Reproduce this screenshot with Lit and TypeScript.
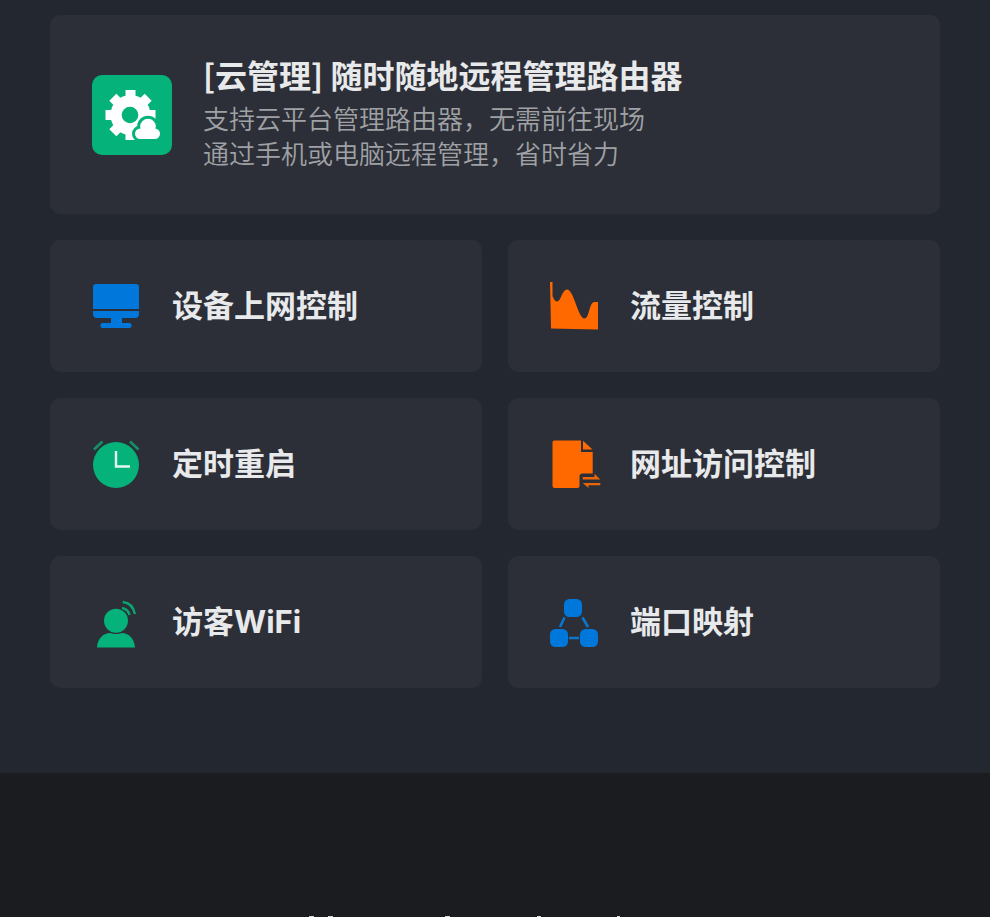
import { LitElement, html, svg, css } from "lit";
import { customElement } from "lit/decorators.js";

const monitor = svg`
  <g fill="#0078db">
    <path d="M4 2h40a3 3 0 0 1 3 3v22H1V5a3 3 0 0 1 3-3zM1 29h46v3a4 4 0 0 1-4 4H5a4 4 0 0 1-4-4z"/>
    <path d="M19 35h11v8H19z"/>
    <rect x="8.500" y="41" width="31" height="5" rx="2"/>
  </g>`;

const traffic = svg`
  <path fill="#ff6900" d="M0 0h2.500v14C4 18 5.500 19.500 7 19.500c4 0 5-12 10-12 7 0 11 29 17.500 29 5 0 4.500-16.500 10-16.500H48v27.500L1 46.500z"/>`;

const clock = svg`
  <circle cx="24" cy="25" r="23" fill="#05b27a"/>
  <path d="M24 11v15.500H38" fill="none" stroke="#e2f7ef" stroke-width="2.400"/>
  <path d="M2 9.500l8.500-8M38 1.500l8.500 8" fill="none" stroke="#129068" stroke-width="2.600"/>`;

const page = svg`
  <path fill="#ff6900" d="M4.500 .5H31V12h11.700v21.500H32.500a3 3 0 0 0-3 3V46a2 2 0 0 1-2 2h-23a2 2 0 0 1-2-2V2.500a2 2 0 0 1 2-2zM33 .7l9.500 8.800H33z"/>
  <path fill="#e8650a" d="M32.700 37h11.800v-3.300l5.800 5.800H32.700zM50.300 43H32.700l5.800 5v-2.700h11.800z"/>`;

const guest = svg`
  <g fill="#05b27a">
    <circle cx="24" cy="22.800" r="12"/>
    <path d="M5 49.500C5.500 40 12 35 18 35q6 2 12 0c6 0 12.500 5 13 14.500z"/>
  </g>
  <path d="M30 10q6 1 7.500 7M30.700 4q10 1 12.200 12" fill="none" stroke="#09a674" stroke-width="2.400"/>`;

const nodes = svg`
  <g fill="#0078db">
    <rect x="14" y="1" width="18" height="18" rx="5.500"/>
    <rect x="0" y="31" width="18" height="18" rx="5.500"/>
    <rect x="30" y="31" width="18" height="18" rx="5.500"/>
  </g>
  <path d="M14.500 19.500L10 29M32.500 19.500L38 29M19 40h10" fill="none" stroke="#0878cf" stroke-width="2.600"/>`;

const features = [
  { name: "设备上网控制", icon: monitor },
  { name: "流量控制", icon: traffic },
  { name: "定时重启", icon: clock },
  { name: "网址访问控制", icon: page },
  { name: "访客WiFi", icon: guest },
  { name: "端口映射", icon: nodes },
];

@customElement("feature-card")
class FeatureCard extends LitElement {
  static properties = { name: {}, icon: { attribute: false } };
  declare name: string;
  declare icon: unknown;

  static styles = css`
    :host {
      display: flex;
      align-items: center;
      gap: 30px;
      min-height: 132px;
      box-sizing: border-box;
      padding: 0 42px;
      border-radius: 10px;
      background: #2c2f37;
    }
    .icon {
      flex: none;
      width: 50px;
      height: 48px;
      overflow: visible;
    }
    .name {
      margin: 0;
      font-family: Inter, "Noto Sans CJK SC", sans-serif;
      font-size: 31px;
      line-height: 40px;
      font-weight: 700;
    }
  `;

  render() {
    return html`
      <svg class="icon" viewBox="0 0 50 48" aria-hidden="true">${this.icon}</svg>
      <h3 class="name">${this.name}</h3>
    `;
  }
}

@customElement("app-root")
class AppRoot extends LitElement {
  static styles = css`
    :host {
      display: flex;
      flex-direction: column;
      min-height: 100vh;
      background: #1b1c20;
      color: #e8e9eb;
      font-family: "Noto Sans CJK SC", "Liberation Sans", sans-serif;
    }
    .features {
      display: grid;
      grid-template-columns: 1fr 1fr;
      gap: 26px;
      padding: 15px 50px 85px;
      background: #23272f;
    }
    .cloud {
      grid-column: 1 / -1;
      display: flex;
      align-items: center;
      gap: 31px;
      min-height: 199px;
      box-sizing: border-box;
      padding: 0 42px;
      border-radius: 10px;
      background: #2c2f37;
    }
    .badge {
      flex: none;
      width: 80px;
      height: 80px;
    }
    .copy {
      padding-bottom: 8px;
    }
    .title {
      margin: 0 0 4px;
      font-size: 32px;
      line-height: 44px;
      font-weight: 700;
    }
    .text {
      margin: 0;
      font-size: 26px;
      line-height: 35px;
      font-weight: 350;
      color: #9fa1a5;
    }
    .next {
      flex: 1;
      display: flex;
      justify-content: center;
      align-items: flex-end;
    }
    .edge {
      width: 390px;
      height: 2px;
    }
  `;

  render() {
    return html`
      <section class="features">
        <article class="cloud">
          <svg class="badge" viewBox="0 0 80 80" aria-hidden="true">
            <rect width="80" height="80" rx="10" fill="#05b27a" />
            <g fill="#fff">
              <circle cx="38.500" cy="40" r="20" />
              ${[0, 45, 90, 135, 180, 225, 270, 315].map(
                (a) => svg`<rect x="33.500" y="15" width="10" height="12" transform="rotate(${a} 38.500 40)"/>`
              )}
            </g>
            <circle cx="38" cy="40" r="8.300" fill="#05b27a" />
            <g fill="#05b27a" stroke="#05b27a" stroke-width="6">
              <rect x="43" y="53.500" width="25" height="10.500" rx="5.200" />
              <circle cx="56" cy="51.500" r="7.800" />
            </g>
            <g fill="#fff">
              <rect x="43" y="53.500" width="25" height="10.500" rx="5.200" />
              <circle cx="56" cy="51.500" r="7.800" />
            </g>
          </svg>
          <div class="copy">
            <h2 class="title">[云管理] 随时随地远程管理路由器</h2>
            <p class="text">支持云平台管理路由器，无需前往现场<br />通过手机或电脑远程管理，省时省力</p>
          </div>
        </article>
        ${features.map((f) => html`<feature-card .name=${f.name} .icon=${f.icon}></feature-card>`)}
      </section>
      <section class="next">
        <svg class="edge" viewBox="0 0 390 2" aria-hidden="true">
          <path d="M9 1h5v1H9zM28 1h5v1h-5zM145 1h5v1h-5zM237 1h4v1h-4zM317 1h3v1h-3z" fill="#d8d9dc" />
        </svg>
      </section>
    `;
  }
}
